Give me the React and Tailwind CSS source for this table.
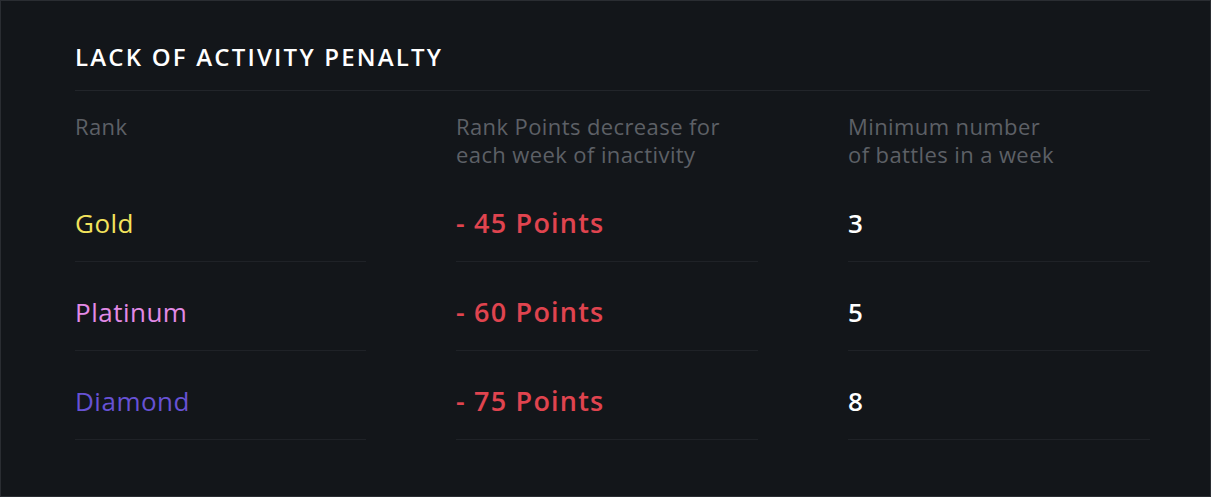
import React from 'react';

const rows = [
  { rank: 'Gold', color: 'text-[#f3e35c]', points: '- 45 Points', battles: '3' },
  { rank: 'Platinum', color: 'text-[#e28ae6]', points: '- 60 Points', battles: '5' },
  { rank: 'Diamond', color: 'text-[#6752d4]', points: '- 75 Points', battles: '8' },
];

const App = () => {
  return (
    <div className="w-[1211px] h-[497px] bg-[#13161a] border border-[#2a2d32] pl-[74px] pr-[60px] font-['Open_Sans',sans-serif]">
      <div className="pt-[40px] pb-[17px] border-b border-[#22252a]">
        <h2 className="text-[24px] leading-[32px] font-semibold tracking-[2.2px] text-white">
          LACK OF ACTIVITY PENALTY
        </h2>
      </div>

      <div className="grid grid-cols-[291px_302px_302px] gap-x-[90px]">
        <div className="pt-[21px] pb-[5px] text-[22px] leading-[28px] tracking-[0.4px] text-[#5d6066]">Rank</div>
        <div className="pt-[21px] pb-[5px] text-[22px] leading-[28px] tracking-[0.4px] text-[#5d6066]">
          Rank Points decrease for
          <br />
          each week of inactivity
        </div>
        <div className="pt-[21px] pb-[5px] text-[22px] leading-[28px] tracking-[0.4px] text-[#5d6066]">
          Minimum number
          <br />
          of battles in a week
        </div>

        {rows.map((r) => (
          <React.Fragment key={r.rank}>
            <div className={`pt-[34px] pb-[22px] border-b border-[#1f2227] text-[26px] leading-[32px] tracking-[0.5px] ${r.color}`}>
              {r.rank}
            </div>
            <div className="pt-[34px] pb-[22px] border-b border-[#1f2227] text-[27px] leading-[32px] font-semibold tracking-[1.2px] text-[#e0444f]">
              {r.points}
            </div>
            <div className="pt-[34px] pb-[22px] border-b border-[#1f2227] text-[26px] leading-[32px] font-semibold text-white">
              {r.battles}
            </div>
          </React.Fragment>
        ))}
      </div>
    </div>
  );
};

export default App;
